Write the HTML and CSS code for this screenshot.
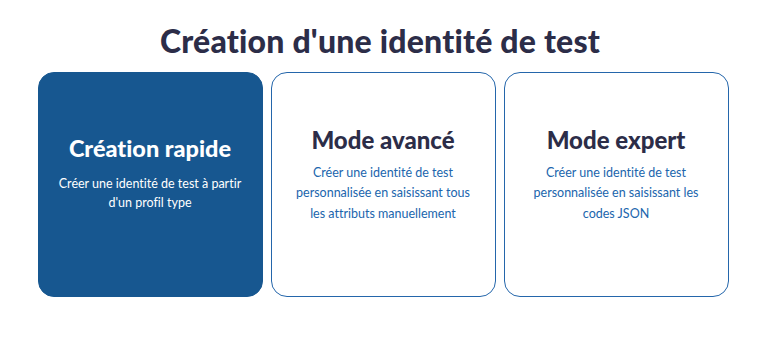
FILE: index.html
```html
<!DOCTYPE html>
<html lang="fr">
<head>
<meta charset="utf-8">
<title>Création d'une identité de test</title>
<link rel="stylesheet" href="styles.css">
</head>
<body>
<main class="page">
  <h1 class="page-title">Création d'une identité de test</h1>
  <div class="cards">
    <a class="card card--active" href="#">
      <h2 class="card-title">Création rapide</h2>
      <p class="card-text">Créer une identité de test à partir d'un profil type</p>
    </a>
    <a class="card" href="#">
      <h2 class="card-title">Mode avancé</h2>
      <p class="card-text">Créer une identité de test personnalisée en saisissant tous les attributs manuellement</p>
    </a>
    <a class="card" href="#">
      <h2 class="card-title">Mode expert</h2>
      <p class="card-text">Créer une identité de test personnalisée en saisissant les codes JSON</p>
    </a>
  </div>
</main>
</body>
</html>
```
FILE: styles.css
```css
html, body {
  margin: 0;
  padding: 0;
  background: #ffffff;
}
body {
  font-family: "Lato", "Noto Sans", sans-serif;
  font-variant-ligatures: none;
}
.page {
  width: 690px;
  margin-left: 38px;
  display: flex;
  flex-direction: column;
  align-items: center;
}
.page-title {
  margin: 22px 0 0;
  padding-right: 6px;
  font-size: 32px;
  line-height: 38px;
  font-weight: 900;
  color: #2c2d48;
  letter-spacing: 0.2px;
  height: 50px;
}
.cards {
  display: grid;
  grid-template-columns: repeat(3, 225px);
  gap: 8px;
}
.card {
  box-sizing: border-box;
  height: 225px;
  border: 1px solid #2466ab;
  border-radius: 16px;
  background: #ffffff;
  display: flex;
  flex-direction: column;
  align-items: center;
  justify-content: center;
  text-align: center;
  padding: 0 22px 18px;
  text-decoration: none;
  color: #2065ad;
}
.card--active {
  background: #175790;
  border-color: #175790;
  color: #ffffff;
  padding: 0 12px 23px;
}
.card-title {
  margin: 0 0 10px;
  font-size: 24px;
  line-height: 26px;
  font-weight: 900;
  color: #2c2d48;
}
.card--active .card-title {
  color: #ffffff;
  font-size: 23.5px;
  margin-bottom: 13px;
}
.card-text {
  margin: 0;
  font-size: 12.5px;
  line-height: 20.5px;
}
.card--active .card-text {
  line-height: 19px;
}
```
